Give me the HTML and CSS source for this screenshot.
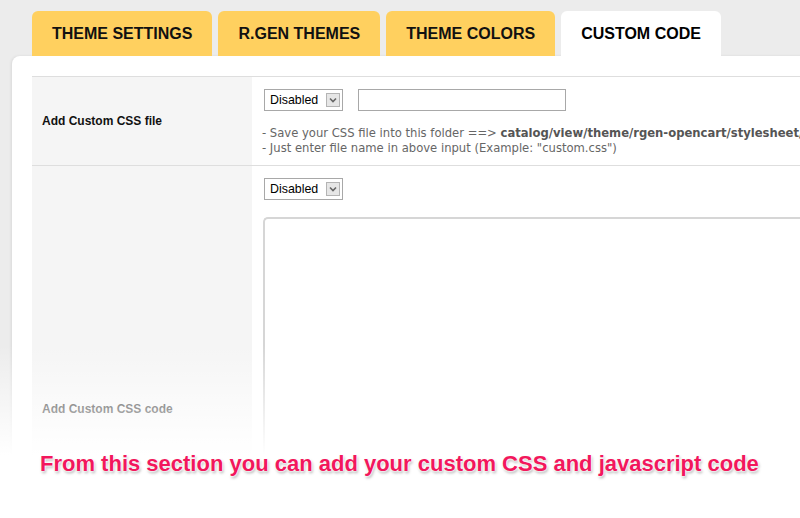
FILE: index.html
```html
<!DOCTYPE html>
<html lang="en">
<head>
<meta charset="utf-8">
<title>Custom Code</title>
<link rel="stylesheet" href="styles.css">
</head>
<body>
<div class="page">
  <nav class="tabs">
    <div class="tab">THEME SETTINGS</div>
    <div class="tab">R.GEN THEMES</div>
    <div class="tab">THEME COLORS</div>
    <div class="tab tab-active">CUSTOM CODE</div>
  </nav>
  <section class="panel">
    <div class="table">
      <div class="row row-file">
        <div class="label">Add Custom CSS file</div>
        <div class="field">
          <div class="controls">
            <div class="select"><span>Disabled</span><span class="sel-arrow"><svg width="8" height="6" viewBox="0 0 8 6"><path d="M1 1.5 L4 4.5 L7 1.5" fill="none" stroke="#666" stroke-width="1.6"/></svg></span></div>
            <div class="text-input"></div>
          </div>
          <div class="help">
            <div>- Save your CSS file into this folder ==&gt; <b>catalog/view/theme/rgen-opencart/stylesheet/</b></div>
            <div>- Just enter file name in above input (Example: "custom.css")</div>
          </div>
        </div>
      </div>
      <div class="row row-code">
        <div class="label">Add Custom CSS code</div>
        <div class="field">
          <div class="controls">
            <div class="select"><span>Disabled</span><span class="sel-arrow"><svg width="8" height="6" viewBox="0 0 8 6"><path d="M1 1.5 L4 4.5 L7 1.5" fill="none" stroke="#666" stroke-width="1.6"/></svg></span></div>
          </div>
          <div class="textarea"></div>
        </div>
      </div>
    </div>
  </section>
  <div class="fade"></div>
  <p class="caption">From this section you can add your custom CSS and javascript code</p>
</div>
</body>
</html>
```
FILE: styles.css
```css
html, body {
  margin: 0;
  padding: 0;
  width: 800px;
  height: 518px;
  overflow: hidden;
  background: #ececec;
  font-family: "Liberation Sans", Arial, sans-serif;
}

.page {
  position: relative;
  height: 518px;
  padding-top: 11px;
  box-sizing: border-box;
  overflow: hidden;
}

.tabs {
  display: flex;
  gap: 6px;
  margin-left: 32px;
}

.tab {
  height: 45px;
  line-height: 45px;
  padding: 0 20px;
  background: #ffd05f;
  border-radius: 6px 6px 0 0;
  font-weight: bold;
  font-size: 16px;
  color: #111;
  white-space: nowrap;
}

.tab-active {
  background: #fff;
  color: #000;
}

.panel {
  margin-left: 12px;
  width: 1000px;
  background: #fff;
  border-radius: 8px 0 0 0;
  padding: 20px 0 0 20px;
  box-shadow: -1px 0 3px rgba(0, 0, 0, 0.08);
}

.table {
  border-top: 1px solid #dedede;
}

.row {
  display: grid;
  grid-template-columns: 220px 1fr;
  border-bottom: 1px solid #dedede;
}

.row-file {
  height: 88px;
}

.row-code {
  height: 486px;
}

.label {
  background: #f5f5f5;
  display: flex;
  align-items: center;
  padding-left: 10px;
  font-weight: bold;
  font-size: 12px;
  color: #111;
}

.field {
  padding: 12px 0 0 12px;
}

.controls {
  display: flex;
  gap: 15px;
  align-items: flex-start;
}

.select {
  width: 79px;
  height: 22px;
  box-sizing: border-box;
  border: 1px solid #a8a8a8;
  display: flex;
  align-items: center;
  padding-left: 5px;
  font-size: 12.4px;
  color: #000;
}

.sel-arrow {
  margin-left: auto;
  margin-right: 2px;
  width: 14px;
  height: 14px;
  box-sizing: border-box;
  border: 1px solid #b4b4b4;
  background: #e6e6e6;
  display: flex;
  align-items: center;
  justify-content: center;
}

.text-input {
  width: 208px;
  height: 22px;
  box-sizing: border-box;
  border: 1px solid #a8a8a8;
}

.help {
  margin-top: 15px;
  margin-left: -2px;
  font-family: "DejaVu Sans", Verdana, sans-serif;
  font-size: 11.6px;
  line-height: 15px;
  color: #666;
  white-space: nowrap;
}

.help b {
  color: #555;
}

.textarea {
  margin-top: 17px;
  margin-left: -1px;
  height: 420px;
  border: 2px solid #d6d6d6;
  border-right: none;
  border-radius: 5px 0 0 0;
}

.fade {
  position: absolute;
  left: 0;
  right: 0;
  top: 345px;
  bottom: 0;
  background: linear-gradient(to bottom, rgba(255, 255, 255, 0) 0, #fff 110px);
}

.caption {
  position: absolute;
  left: 40px;
  top: 453px;
  margin: 0;
  font-weight: bold;
  font-size: 22px;
  line-height: 22px;
  color: #f2175c;
  white-space: nowrap;
  text-shadow: 0 0 2px #fff, 0 0 2px #fff, 0 0 3px #fff, 1px 2px 3px rgba(0, 0, 0, 0.35);
}
```
